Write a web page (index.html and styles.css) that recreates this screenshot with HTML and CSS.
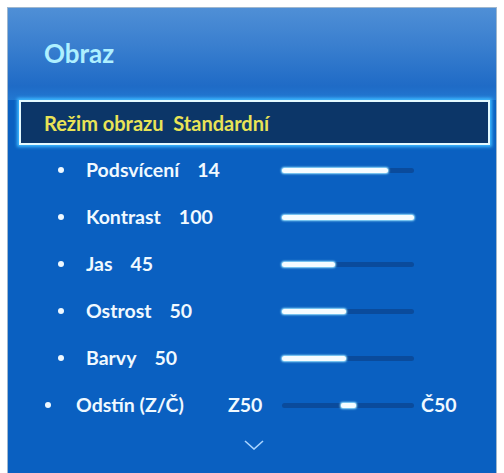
FILE: index.html
```html
<!DOCTYPE html>
<html lang="cs">
<head>
<meta charset="utf-8">
<title>Obraz</title>
<link rel="stylesheet" href="styles.css">
</head>
<body>
<div class="panel">
  <div class="header">
    <div class="title">Obraz</div>
  </div>
  <div class="selected">
    <span class="sel-text">Režim obrazu&nbsp; Standardní</span>
  </div>
  <ul class="list">
    <li class="row">
      <span class="bullet"></span>
      <span class="label">Podsvícení<span class="val">14</span></span>
      <span class="track"><span class="fill" style="width:106px"></span></span>
    </li>
    <li class="row">
      <span class="bullet"></span>
      <span class="label">Kontrast<span class="val">100</span></span>
      <span class="track"><span class="fill" style="width:132px"></span></span>
    </li>
    <li class="row">
      <span class="bullet"></span>
      <span class="label">Jas<span class="val">45</span></span>
      <span class="track"><span class="fill" style="width:53px"></span></span>
    </li>
    <li class="row">
      <span class="bullet"></span>
      <span class="label">Ostrost<span class="val">50</span></span>
      <span class="track"><span class="fill" style="width:64px"></span></span>
    </li>
    <li class="row">
      <span class="bullet"></span>
      <span class="label">Barvy<span class="val">50</span></span>
      <span class="track"><span class="fill" style="width:64px"></span></span>
    </li>
    <li class="row row-tint">
      <span class="bullet"></span>
      <span class="label label-tint">Odstín (Z/Č)</span>
      <span class="side-left">Z50</span>
      <span class="track"><span class="marker"></span></span>
      <span class="side-right">Č50</span>
    </li>
  </ul>
  <div class="more">
    <svg width="20" height="10" viewBox="0 0 20 10"><polyline points="1,1 10,9 19,1" fill="none" stroke="#a9d4ff" stroke-width="1.6"/></svg>
  </div>
</div>
</body>
</html>
```
FILE: styles.css
```css
html, body {
  margin: 0;
  padding: 0;
  background: #ffffff;
}
body {
  font-family: Lato, "Open Sans", "DejaVu Sans", sans-serif;
}
.panel {
  box-sizing: border-box;
  margin: 7px 0 0 7px;
  width: 490px;
  height: 466px;
  border: 1px solid #9fb7ce;
  border-bottom: none;
  background: #0a60c1;
  overflow: hidden;
}
.header {
  box-sizing: border-box;
  height: 92px;
  padding: 32px 0 0 36px;
  background: linear-gradient(to bottom, #4f8fd6 0%, #3a7fcf 40%, #1f6bc6 85%, #2278d2 100%);
}
.title {
  font-size: 26px;
  line-height: 26px;
  font-weight: 700;
  color: #aef0ff;
}
.selected {
  box-sizing: border-box;
  height: 45px;
  margin: 0 6px 0 11px;
  border: 2px solid #e4faff;
  box-shadow: 0 0 3px 2px #3db8ff;
  background: #0c3668;
  display: flex;
  align-items: center;
  padding-left: 23px;
}
.sel-text {
  font-size: 20px;
  font-weight: 700;
  color: #e9e356;
  white-space: pre;
}
.list {
  list-style: none;
  margin: 1px 0 0 0;
  padding: 0;
}
.row {
  height: 47px;
  display: flex;
  align-items: center;
  padding-left: 50px;
  color: #f0f9ff;
  font-size: 19.5px;
  font-weight: 700;
}
.bullet {
  width: 6px;
  height: 6px;
  border-radius: 50%;
  background: #eef8ff;
  margin-right: 22px;
  flex: none;
}
.label {
  width: 196px;
  flex: none;
  white-space: nowrap;
}
.val {
  margin-left: 18px;
}
.track {
  position: relative;
  width: 132px;
  height: 5px;
  border-radius: 3px;
  background: #0a4b9c;
  flex: none;
  margin-top: 2px;
}
.fill {
  display: block;
  height: 5px;
  border-radius: 3px;
  background: #f5fcff;
  box-shadow: 0 0 2px 1px #9ee6ff;
}
.marker {
  position: absolute;
  left: 59px;
  top: 0;
  width: 15px;
  height: 5px;
  border-radius: 2px;
  background: #f5fcff;
  box-shadow: 0 0 2px 1px #9ee6ff;
}
.row-tint {
  padding-left: 37px;
}
.row-tint .bullet {
  margin-right: 25px;
}
.label-tint {
  width: 152px;
}
.side-left {
  width: 54px;
  flex: none;
}
.side-right {
  margin-left: 7px;
}
.more {
  height: 34px;
  display: flex;
  align-items: center;
  padding-left: 236px;
}
.more svg {
  display: block;
}
```
